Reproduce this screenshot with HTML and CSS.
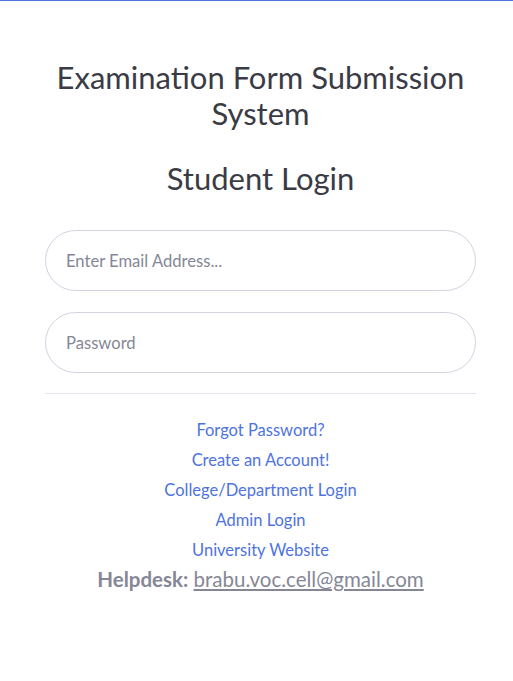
FILE: index.html
```html
<!DOCTYPE html>
<html>
<head>
<meta charset="utf-8">
<link rel="stylesheet" href="styles.css">
</head>
<body>
<div class="page">
  <div class="login">
    <h1 class="title">Examination Form Submission System</h1>
    <h2 class="subtitle">Student Login</h2>
    <form class="form">
      <input class="field" type="email" placeholder="Enter Email Address...">
      <input class="field" type="password" placeholder="Password">
    </form>
    <hr class="rule">
    <div class="links">
      <a class="link" href="#">Forgot Password?</a>
      <a class="link" href="#">Create an Account!</a>
      <a class="link" href="#">College/Department Login</a>
      <a class="link" href="#">Admin Login</a>
      <a class="link" href="#">University Website</a>
    </div>
    <p class="help"><b>Helpdesk:</b> <a class="mail" href="#">brabu.voc.cell@gmail.com</a></p>
  </div>
</div>
</body>
</html>
```
FILE: styles.css
```css
* { box-sizing: border-box; }
html, body { margin: 0; padding: 0; background: #fff; }
body {
  font-family: "Lato", "Noto Sans", sans-serif;
  color: #3a3b45;
  border-top: 1px solid #4e73df;
}
.page { padding: 0 37px 0 45px; }
.login { display: flex; flex-direction: column; }
.title {
  margin: 58px 0 0;
  font-weight: 400;
  font-size: 31px;
  line-height: 36px;
  text-align: center;
}
.subtitle {
  margin: 29px 0 0;
  font-weight: 400;
  font-size: 31px;
  line-height: 36px;
  text-align: center;
}
.form { display: flex; flex-direction: column; gap: 21px; margin-top: 34px; }
.field {
  height: 61px;
  width: 100%;
  border: 1px solid #d1d3e2;
  border-radius: 160px;
  padding: 0 20px;
  font-family: inherit;
  font-size: 16.6px;
  color: #6e707e;
  outline: none;
}
.field::placeholder { color: #858796; }
.rule { margin: 20px 0 0; border: 0; border-top: 1px solid #e3e6f0; width: 100%; }
.links { display: flex; flex-direction: column; align-items: center; margin-top: 21px; }
.link {
  color: #4e73df;
  text-decoration: none;
  font-size: 16.5px;
  line-height: 30px;
}
.help {
  margin: 0;
  text-align: center;
  font-size: 20.5px;
  line-height: 28px;
  color: #858796;
}
.help b { font-weight: 700; }
.mail { color: #858796; text-decoration: underline; }
```
